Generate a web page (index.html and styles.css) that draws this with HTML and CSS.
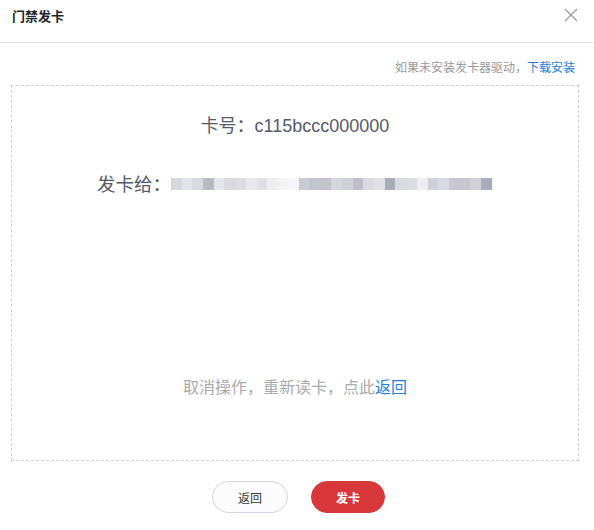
FILE: index.html
```html
<!DOCTYPE html>
<html lang="zh">
<head>
<meta charset="utf-8">
<link rel="stylesheet" href="styles.css">
</head>
<body>
<div class="dialog">
  <div class="header">
    <span class="title">门禁发卡</span>
    <svg class="close" width="14" height="14" viewBox="0 0 14 14"><path d="M1 1L13 13M13 1L1 13" stroke="#999" stroke-width="1.2" fill="none"/></svg>
  </div>
  <div class="body">
    <div class="tip">如果未安装发卡器驱动，<a class="link">下载安装</a></div>
    <div class="box">
      <div class="cardno">卡号：c115bccc000000</div>
      <div class="target"><span class="label">发卡给：</span><span class="mosaic">
        <span class="m" style="background:#d6d7de"></span><span class="m" style="background:#e2e3e8"></span><span class="m" style="background:#dadbe1"></span><span class="m" style="background:#b8bac6"></span><span class="m" style="background:#e5e6ea"></span><span class="m" style="background:#d9dae0"></span><span class="m" style="background:#dcdde3"></span><span class="m" style="background:#e8e9ed"></span><span class="m" style="background:#dfe0e5"></span><span class="m" style="background:#eeeef1"></span><span class="m" style="background:#f3f3f5"></span><span class="m" style="background:#f6f6f8"></span><span class="m" style="background:#c9cbd4"></span><span class="m" style="background:#c2c4cd"></span><span class="m" style="background:#c2c4cd"></span><span class="m" style="background:#d6d7de"></span><span class="m" style="background:#cfd0d8"></span><span class="m" style="background:#bcbec9"></span><span class="m" style="background:#d9dae0"></span><span class="m" style="background:#e0e1e6"></span><span class="m" style="background:#a9acb9"></span><span class="m" style="background:#d9dae0"></span><span class="m" style="background:#dcdde3"></span><span class="m" style="background:#eeeef1"></span><span class="m" style="background:#cfd0d8"></span><span class="m" style="background:#dadbe1"></span><span class="m" style="background:#c6c8d1"></span><span class="m" style="background:#c6c8d1"></span><span class="m" style="background:#d0d1d8"></span><span class="m" style="background:#a9acb9"></span>
      </span></div>
      <div class="cancel">取消操作，重新读卡，点此<a class="link">返回</a></div>
    </div>
  </div>
  <div class="footer">
    <button class="btn btn-default">返回</button>
    <button class="btn btn-primary">发卡</button>
  </div>
</div>
</body>
</html>
```
FILE: styles.css
```css
* { box-sizing: border-box; }
html, body { margin: 0; padding: 0; background: #fff; }
body { font-family: "Noto Sans CJK SC", "Liberation Sans", sans-serif; width: 594px; height: 530px; overflow: hidden; }
.dialog { width: 594px; height: 530px; display: flex; flex-direction: column; }
.header { height: 43px; border-bottom: 1px solid #e8e8e8; display: flex; align-items: center; justify-content: space-between; padding: 0 16px 0 12px; }
.title { font-size: 13px; font-weight: 600; color: #1f2329; margin-top: -12px; }
.close { margin-top: -12px; }
.body { padding: 0 15px 0 11px; }
.tip { text-align: right; font-size: 12px; color: #999; line-height: 16px; margin-top: 16px; padding-right: 4px; }
.link { color: #1a7fe0; cursor: pointer; }
.box { margin-top: 10px; height: 376px; border: 1px dashed #cfcfd8; display: flex; flex-direction: column; align-items: center; }
.cardno { margin-top: 28px; font-size: 18px; line-height: 24px; color: #555a6b; font-family: "Liberation Sans", "Noto Sans CJK SC", sans-serif; }
.target { align-self: flex-start; margin-left: 85px; margin-top: 32px; display: flex; align-items: center; }
.label { font-size: 18.5px; line-height: 26px; color: #555a6b; }
.mosaic { display: flex; height: 12px; margin-left: 0; margin-top: 2px; }
.m { width: 10.7px; height: 12px; display: block; }
.cancel { margin-top: auto; margin-bottom: 63px; font-size: 16px; line-height: 22px; color: #aaa; }
.footer { display: flex; justify-content: center; gap: 23px; margin-top: 20px; padding-left: 3px; }
.btn { height: 32px; border-radius: 16px; font-size: 12px; font-family: "Noto Sans CJK SC", sans-serif; cursor: pointer; }
.btn-default { width: 76px; background: #fcfbfe; border: 1px solid #d6d3df; color: #333; }
.btn-primary { width: 74px; background: #d9383b; border: 1px solid #d9383b; color: #fff; font-weight: bold; }
```
